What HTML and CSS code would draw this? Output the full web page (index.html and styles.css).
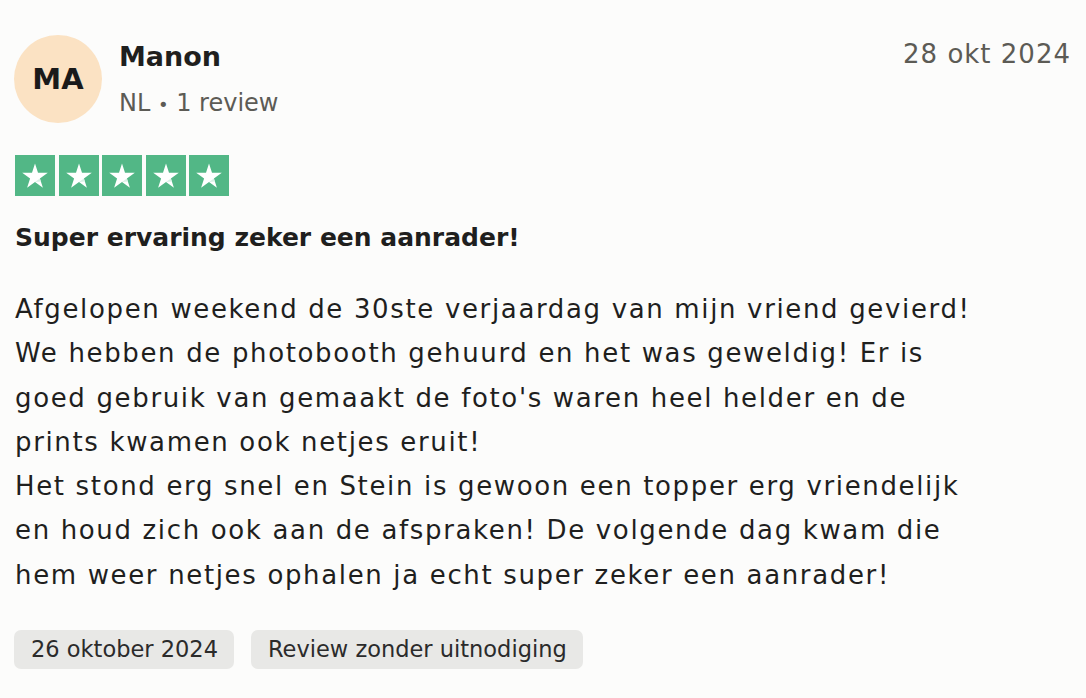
FILE: index.html
```html
<!DOCTYPE html>
<html lang="nl">
<head>
    <meta charset="UTF-8">
    <meta name="viewport" content="width=device-width, initial-scale=1.0">
    <title>Review - Manon</title>
    <link rel="stylesheet" href="styles.css">
</head>
<body>
    <article class="review">
        <header class="review-head">
            <div class="consumer">
                <div class="avatar">MA</div>
                <div class="consumer-info">
                    <div class="consumer-name">Manon</div>
                    <div class="consumer-meta">NL <span class="dot">&bull;</span> 1 review</div>
                </div>
            </div>
            <time class="posted" datetime="2024-10-28">28 okt 2024</time>
        </header>

        <div class="stars" aria-label="5 van 5 sterren">
            <span class="star"><svg viewBox="0 0 40 41"><polygon points="20,8.5 23,17.8 32.8,17.8 24.9,23.6 27.9,32.8 20,27.1 12.1,32.8 15.1,23.6 7.2,17.8 17,17.8" fill="#fff"/><polygon points="24.9,23.6 25.8,26.4 20,27.1" fill="#d9f0e5"/></svg></span>
            <span class="star"><svg viewBox="0 0 40 41"><polygon points="20,8.5 23,17.8 32.8,17.8 24.9,23.6 27.9,32.8 20,27.1 12.1,32.8 15.1,23.6 7.2,17.8 17,17.8" fill="#fff"/><polygon points="24.9,23.6 25.8,26.4 20,27.1" fill="#d9f0e5"/></svg></span>
            <span class="star"><svg viewBox="0 0 40 41"><polygon points="20,8.5 23,17.8 32.8,17.8 24.9,23.6 27.9,32.8 20,27.1 12.1,32.8 15.1,23.6 7.2,17.8 17,17.8" fill="#fff"/><polygon points="24.9,23.6 25.8,26.4 20,27.1" fill="#d9f0e5"/></svg></span>
            <span class="star"><svg viewBox="0 0 40 41"><polygon points="20,8.5 23,17.8 32.8,17.8 24.9,23.6 27.9,32.8 20,27.1 12.1,32.8 15.1,23.6 7.2,17.8 17,17.8" fill="#fff"/><polygon points="24.9,23.6 25.8,26.4 20,27.1" fill="#d9f0e5"/></svg></span>
            <span class="star"><svg viewBox="0 0 40 41"><polygon points="20,8.5 23,17.8 32.8,17.8 24.9,23.6 27.9,32.8 20,27.1 12.1,32.8 15.1,23.6 7.2,17.8 17,17.8" fill="#fff"/><polygon points="24.9,23.6 25.8,26.4 20,27.1" fill="#d9f0e5"/></svg></span>
        </div>

        <h2 class="review-title">Super ervaring zeker een aanrader!</h2>

        <p class="review-text">Afgelopen weekend de 30ste verjaardag van mijn vriend gevierd!<br>
            We hebben de photobooth gehuurd en het was geweldig! Er is<br>
            goed gebruik van gemaakt de foto's waren heel helder en de<br>
            prints kwamen ook netjes eruit!<br>
            Het stond erg snel en Stein is gewoon een topper erg vriendelijk<br>
            en houd zich ook aan de afspraken! De volgende dag kwam die<br>
            hem weer netjes ophalen ja echt super zeker een aanrader!</p>

        <div class="tags">
            <span class="tag">26 oktober 2024</span>
            <span class="tag">Review zonder uitnodiging</span>
        </div>
    </article>
</body>
</html>
```

FILE: styles.css
```css
body {
    margin: 0;
    background-color: #fcfcfb;
    font-family: "DejaVu Sans", "Liberation Sans", Arial, sans-serif;
    color: #1f1f1e;
}
.review {
    padding: 35px 15px 0 14px;
}
.review-head {
    display: flex;
    justify-content: space-between;
    align-items: flex-start;
}
.consumer {
    display: flex;
    align-items: flex-start;
    gap: 17px;
}
.avatar {
    width: 88px;
    height: 88px;
    border-radius: 50%;
    background-color: #fbe2c3;
    display: flex;
    align-items: center;
    justify-content: center;
    font-size: 29px;
    font-weight: 700;
    color: #1a1a1a;
}
.consumer-info {
    padding-top: 4px;
}
.consumer-name {
    font-size: 27px;
    line-height: 36px;
    font-weight: 700;
}
.consumer-meta {
    margin-top: 11px;
    font-size: 24px;
    line-height: 34px;
    color: #5c5b55;
}
.dot {
    font-size: 18px;
}
.posted {
    margin-top: 3px;
    font-size: 26px;
    line-height: 32px;
    letter-spacing: 1px;
    color: #5c5b55;
}
.stars {
    display: flex;
    gap: 3.5px;
    margin-top: 32px;
    padding-left: 1px;
}
.star {
    width: 40px;
    height: 41px;
    background-color: #52b786;
}
.star svg {
    display: block;
    width: 40px;
    height: 41px;
}
.review-title {
    margin: 26px 0 0;
    font-size: 25px;
    line-height: 32px;
    font-weight: 700;
    padding-left: 1px;
}
.review-text {
    margin: 33px 0 0;
    font-size: 26px;
    line-height: 44.3px;
    letter-spacing: 1.65px;
    padding-left: 1px;
}
.tags {
    display: flex;
    gap: 17px;
    margin-top: 33px;
}
.tag {
    height: 39px;
    line-height: 39px;
    padding: 0 16px 0 17px;
    border-radius: 7px;
    background-color: #e8e8e6;
    font-size: 22.5px;
    color: #2b2b2b;
}
```
